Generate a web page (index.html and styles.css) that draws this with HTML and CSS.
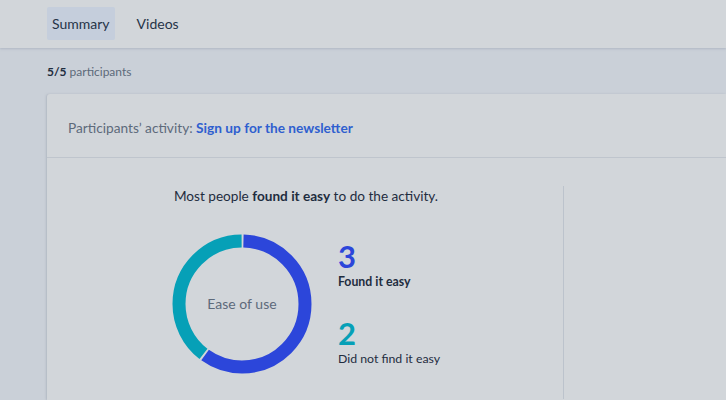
FILE: index.html
```html
<!DOCTYPE html>
<html lang="en">
<head>
    <meta charset="UTF-8">
    <meta name="viewport" content="width=device-width, initial-scale=1.0">
    <title>Summary</title>
    <link rel="stylesheet" href="styles.css">
</head>
<body>
    <div class="topbar">
        <div class="tab active">Summary</div>
        <div class="tab">Videos</div>
    </div>
    <div class="content">
        <div class="count"><b>5/5</b> participants</div>
        <div class="card">
            <div class="card-header">
                Participants&rsquo; activity: <a class="activity-link">Sign up for the newsletter</a>
            </div>
            <div class="card-body">
                <div class="result">
                    <p class="headline">Most people <b>found it easy</b> to do the activity.</p>
                    <div class="chart-row">
                        <div class="donut">
                            <svg width="140" height="140" viewBox="0 0 140 140">
                                <g transform="rotate(-90 70 70)">
                                    <circle cx="70" cy="70" r="63" fill="none" stroke="#2c46da" stroke-width="13" stroke-dasharray="235.5 400" stroke-dashoffset="-1.5"></circle>
                                    <circle cx="70" cy="70" r="63" fill="none" stroke="#06a0b7" stroke-width="13" stroke-dasharray="155.8 400" stroke-dashoffset="-239"></circle>
                                </g>
                            </svg>
                            <span class="donut-label">Ease of use</span>
                        </div>
                        <div class="legend">
                            <div class="legend-item">
                                <div class="num easy">3</div>
                                <div class="legend-text strong">Found it easy</div>
                            </div>
                            <div class="legend-item">
                                <div class="num hard">2</div>
                                <div class="legend-text">Did not find it easy</div>
                            </div>
                        </div>
                    </div>
                </div>
                <div class="side"></div>
            </div>
        </div>
    </div>
</body>
</html>
```

FILE: styles.css
```css
body {
    margin: 0;
    background-color: #cad0d8;
    font-family: 'Lato', 'Open Sans', sans-serif;
    color: #1f2d3f;
    height: 400px;
    overflow: hidden;
}
.topbar {
    height: 48px;
    background-color: #d2d6da;
    box-shadow: 0 1px 2px rgba(150, 160, 175, 0.5);
    display: flex;
    align-items: flex-start;
    padding: 7px 0 0 47px;
    box-sizing: border-box;
    position: relative;
}
.tab {
    height: 33px;
    line-height: 33px;
    padding: 0 5px;
    font-size: 14px;
    color: #263448;
    border-radius: 2px;
    margin-right: 17px;
}
.tab.active {
    background-color: #c5cedc;
}
.content {
    padding: 14px 0 0 47px;
}
.count {
    font-size: 12px;
    color: #5d6a7a;
    height: 32px;
    line-height: 20px;
}
.count b {
    color: #1f2d3f;
}
.card {
    background-color: #d2d6da;
    border-radius: 3px 0 0 0;
    box-shadow: -1px 0 2px rgba(160, 168, 180, 0.6);
    height: 306px;
}
.card-header {
    height: 64px;
    box-sizing: border-box;
    padding: 25px 0 0 21px;
    font-size: 13.7px;
    color: #5d6a7a;
    border-bottom: 1px solid #bfc5cd;
}
.activity-link {
    color: #2f5fcf;
    font-weight: bold;
}
.card-body {
    display: flex;
    padding-top: 28px;
}
.result {
    width: 516px;
    box-sizing: border-box;
    padding-left: 2px;
    display: flex;
    flex-direction: column;
    align-items: center;
}
.headline {
    margin: 0;
    font-size: 13.6px;
    color: #1f2d3f;
    line-height: 20px;
}
.chart-row {
    display: flex;
    align-items: flex-start;
    gap: 26px;
    margin-top: 28px;
}
.donut {
    position: relative;
    width: 140px;
    height: 140px;
}
.donut svg {
    display: block;
}
.donut-label {
    position: absolute;
    top: 0;
    left: 0;
    width: 140px;
    height: 140px;
    line-height: 140px;
    text-align: center;
    font-size: 14px;
    color: #5d6a7a;
}
.legend {
    display: flex;
    flex-direction: column;
    gap: 28px;
    padding-top: 6px;
}
.num {
    font-size: 31px;
    font-weight: bold;
    line-height: 32px;
}
.num.easy {
    color: #2c46da;
}
.num.hard {
    color: #06a0b7;
}
.legend-text {
    font-size: 12.3px;
    color: #1f2d3f;
    margin-top: 2px;
}
.legend-text.strong {
    font-weight: bold;
}
.side {
    border-left: 1px solid #bcc3cc;
    flex: 1;
    height: 213px;
}
```
